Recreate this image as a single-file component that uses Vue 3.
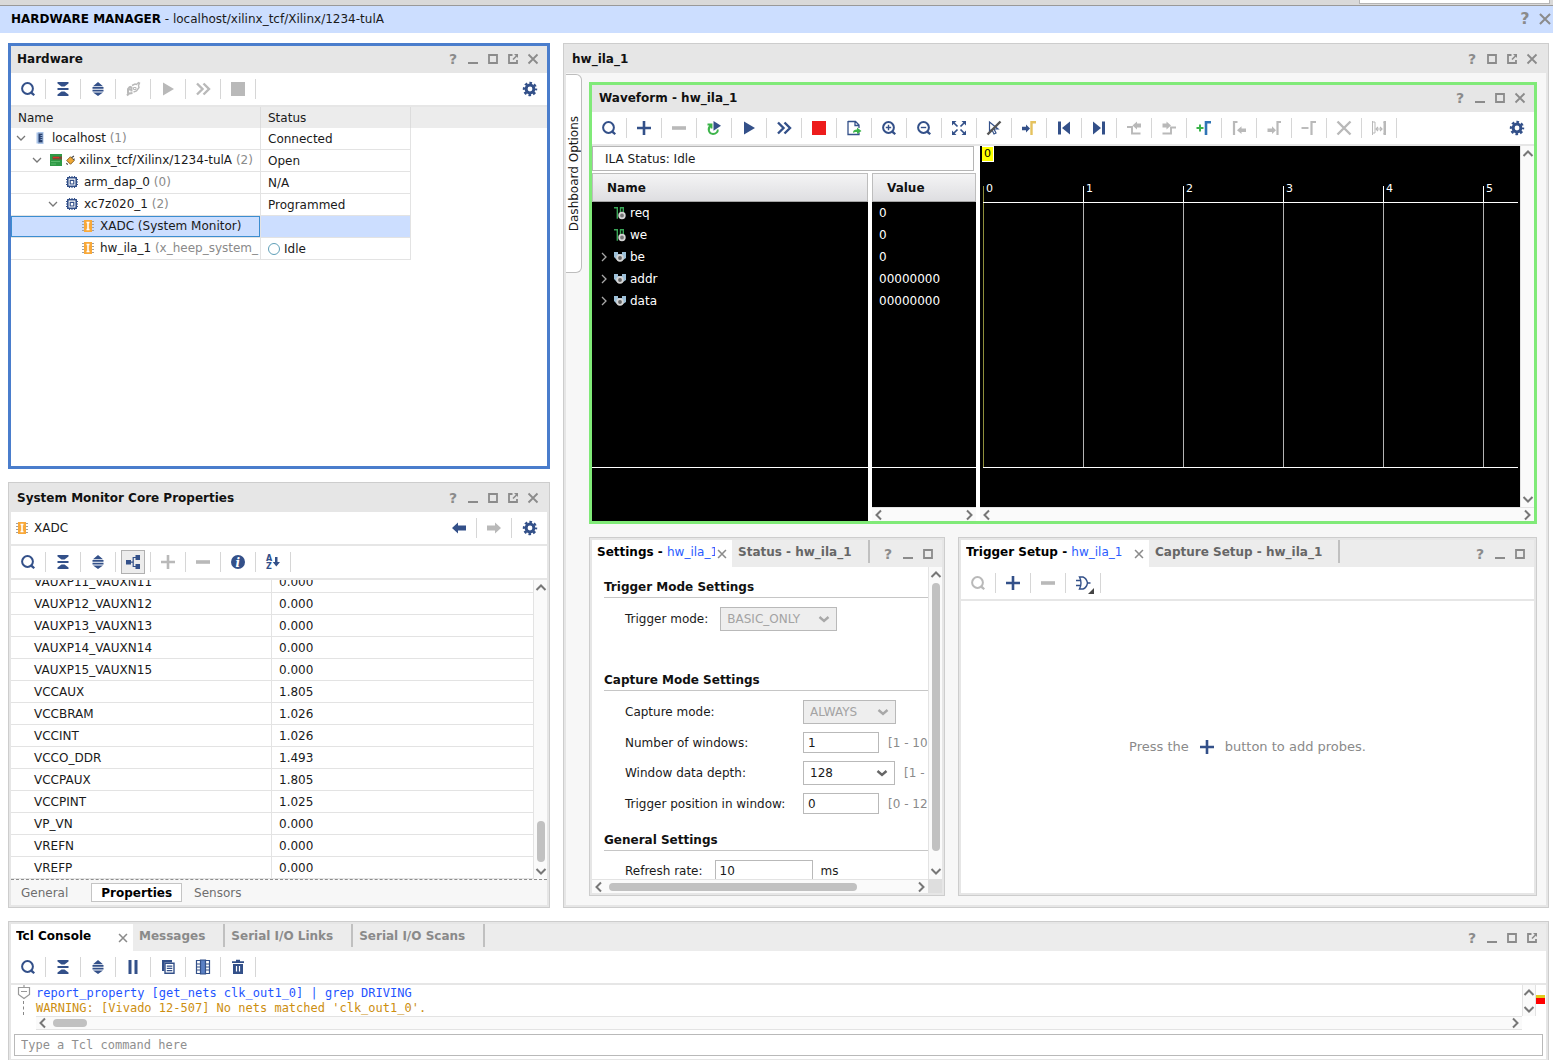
<script setup>
import { h } from 'vue'

const N = '#335089'
const G = '#b9b9b9'

const search = c => `<circle cx="7.5" cy="7.5" r="5.4" fill="none" stroke="${c}" stroke-width="2"/><path d="M11 11.500l1.500-.500 2.500 2.500-1.500 1.500-2.500-2z" fill="${c}"/>`
const plus = c => `<path d="M8 1v14M1 8h14" stroke="${c}" stroke-width="2.6" fill="none"/>`
const minus = c => `<path d="M1 8h14" stroke="${c}" stroke-width="3.6"/>`
const play = c => `<path d="M3 1.500L14 8 3 14.500z" fill="${c}"/>`
const fast = c => `<path d="M2 2.500L7.500 8 2 13.500M8.500 2.500L14 8l-5.500 5.500" fill="none" stroke="${c}" stroke-width="2.400"/>`
const cross = c => `<path d="M1.500 1.500l13 13M14.500 1.500l-13 13" stroke="${c}" stroke-width="2.400"/>`
const arrow = c => `<path d="M1 8l6-5.500V5.500h8v5H7v3z" fill="${c}"/>`
const down = c => `<path d="M3.500 6L8 10l4.500-4" fill="none" stroke="${c}" stroke-width="2.400"/>`

const art = {
  search: search(N),
  searchOff: search(G),
  plus: plus(N),
  plusOff: plus(G),
  minusOff: minus(G),
  play: play(N),
  playOff: play(G),
  fast: fast(N),
  fastOff: fast(G),
  crossOff: cross(G),
  back: arrow(N),
  forward: `<g transform="rotate(180 8 8)">${arrow(G)}</g>`,
  stopOff: `<path d="M1 1h14v14H1z" fill="${G}"/>`,
  stop: `<path d="M1 1h14v14H1z" fill="#ed1c1c"/>`,
  collapse: `<path d="M2.500 1h11v1.500L9.500 5.500h-3L2.500 2.500zM2.500 7h11v2h-11zM6.500 10.500h3l4 3V15h-11v-1.500z" fill="${N}"/>`,
  expand: `<path d="M8 1l5 4.200H3zM2.500 6h11v1.800h-11zM2.500 8.800h11v1.800h-11zM3 11.500h10L8 15z" fill="${N}"/>`,
  gear: `<circle cx="8" cy="8" r="3.900" fill="none" stroke="${N}" stroke-width="3"/><circle cx="8" cy="8" r="6" fill="none" stroke="${N}" stroke-width="2.400" stroke-dasharray="2.600 2.112" stroke-dashoffset="1.300"/>`,
  plugOff: `<path d="M2 14.500l2-2M5 5.500L3 8v4l1.500.500 3-.500M5 5.500l1.500 1v4M4 8.500h3" fill="none" stroke="${G}" stroke-width="2"/><path d="M7 4.500L10 3l1.500.500 2-2 1 .500-1 2.500.500 2-2.500 3.500L8.500 11" fill="none" stroke="${G}" stroke-width="1.400"/><path d="M8.500 6.500h2.500v2H8.500z" fill="none" stroke="${G}" stroke-width="1"/>`,
  tree: `<path d="M1 6h5v4.500H1zM10.500 1H15v5h-4.500zM10.500 10H15v5h-4.500z" fill="${N}"/><path d="M6 8.200h2.500M11 3.500H8.200v9H11" fill="none" stroke="${N}" stroke-width="1.200"/>`,
  info: `<circle cx="8" cy="8" r="7" fill="${N}"/><text x="5.500" y="12.500" font-family="DejaVu Serif" font-size="12" font-weight="bold" font-style="italic" fill="#fff">i</text>`,
  sort: `<text x="1" y="7" font-family="DejaVu Sans" font-size="8" font-weight="bold" fill="${N}">A</text><text x="1" y="15" font-family="DejaVu Sans" font-size="8" font-weight="bold" fill="${N}">Z</text><path d="M10 3h2.500v5H15l-3.700 4.500L7.800 8H10z" fill="${N}"/>`,
  pause: `<path d="M3.500 1h3v14h-3zM9.500 1h3v14h-3z" fill="${N}"/>`,
  copy: `<path d="M2 1h10v2.500H4.500v8.500H2z" fill="${N}"/><path d="M5 4.200h9v10.100H5z" fill="#fff" stroke="${N}" stroke-width="1.400"/><path d="M6.800 7.200h5.500M6.800 9.400h5.500M6.800 11.600h5.500" stroke="${N}" stroke-width="1.200"/>`,
  columns: `<path d="M1.500 1.500h13v13h-13zM1.500 5h13M1.500 8h13M1.500 11h13" fill="none" stroke="${N}" stroke-width="1.200"/><path d="M5.500 1h5v14h-5z" fill="#5b80c4" stroke="${N}" stroke-width="1.200"/>`,
  trash: `<path d="M3 5h10v10H3z" fill="${N}"/><path d="M2 2.200h12V4H2zM6 .800h4v1.500H6z" fill="${N}"/><path d="M6.500 7v5.500M9.500 7v5.500" stroke="#fff" stroke-width="1.200"/>`,
  rerun: `<path d="M7.500 1L15 5.700l-7.500 5z" fill="${N}"/><path d="M1.500 4.500h4v4M4.500 5.500C1 9 3 14 7 14c3 0 5-2 4.800-4.500" fill="none" stroke="#3cb44a" stroke-width="1.900"/>`,
  exportIcon: `<path d="M2 1.500h7.500L13 5v3M2 1v13.500h11v-2M9 1.500V5.500h4" fill="none" stroke="${N}" stroke-width="1.300"/><path d="M7 13c0-2.800 1.500-3.500 4-3.500V7.500l4.500 3.500L11 14v-2c-2 0-3 0-4 1z" fill="#3cb44a"/>`,
  zoomIn: search(N) + `<path d="M7.500 4.800v5.400M4.800 7.500h5.400" stroke="${N}" stroke-width="1.400"/>`,
  zoomOut: search(N) + `<path d="M4.800 7.500h5.400" stroke="${N}" stroke-width="1.400"/>`,
  fit: `<path d="M1 1h4.500L1 5.500zM15 1v4.500L10.500 1zM1 15v-4.500L5.500 15zM15 15h-4.500l4.500-4.500z" fill="${N}"/><path d="M3 3l3.500 3.500M13 3L9.500 6.500M3 13l3.500-3.500M13 13L9.500 9.500" stroke="${N}" stroke-width="1.700"/>`,
  noCursor: `<path d="M3.500 2v9l2.300-1.500L8 14l2-1-2-4h4z" fill="none" stroke="${N}" stroke-width="1.200"/><path d="M14.500 1.500L1.500 14.500" stroke="#555" stroke-width="2.400"/>`,
  toCursor: `<path d="M1 6.700h4V4.500L9 8.500l-4 4v-2.200H1z" fill="${N}"/><path d="M10.500 15V2.200H15" fill="none" stroke="#e5c25e" stroke-width="2.400"/>`,
  first: `<path d="M2 1.500h3v13H2zM14 1.500v13L6 8z" fill="${N}"/>`,
  last: `<path d="M11 1.500h3v13h-3zM2 1.500v13L10 8z" fill="${N}"/>`,
  prevEdge: `<path d="M1 7h5v6.500h8.500" fill="none" stroke="${G}" stroke-width="1.900"/><path d="M6.500 5.500l4.500-4v2h4v4h-4v2z" fill="${G}"/>`,
  nextEdge: `<path d="M1.500 13.500h8.500V7.500h5" fill="none" stroke="${G}" stroke-width="1.900"/><path d="M10 5.500l-4.500-4v2h-4v4h4v2z" fill="${G}"/>`,
  addMarker: `<path d="M.5 8h7M4 4.500v7" stroke="#3cb44a" stroke-width="2"/><path d="M10 15V2.200h5" fill="none" stroke="#2f74b5" stroke-width="2.600"/>`,
  prevMarker: `<path d="M3 15V2h3.500" fill="none" stroke="${G}" stroke-width="2.200"/><path d="M6 10.200l4.500-4v2.300H15v3.500h-4.500v2z" fill="${G}"/>`,
  nextMarker: `<path d="M11.500 15V2H15" fill="none" stroke="${G}" stroke-width="2.200"/><path d="M10 10.200l-4-4v2.300H1.500v3.500H6v2z" fill="${G}"/>`,
  delMarker: `<path d="M.5 8h7" stroke="${G}" stroke-width="1.900"/><path d="M10.500 15V2H15" fill="none" stroke="${G}" stroke-width="2.200"/>`,
  swapMarker: `<path d="M1.500 1v14M1.500 2h2.500v11H1.500M12 2h1v12h-1" fill="none" stroke="${G}" stroke-width="1"/><path d="M14 1v14" stroke="${G}" stroke-width="2"/><path d="M5 9h6M7 7L5 9l2 2M9 7l2 2-2 2" fill="none" stroke="${G}" stroke-width="1.200"/>`,
  gate: `<path d="M4.500 2H8c3 1 4 3.500 4.500 6C12 10.500 11 13 8 14H4.500C6.500 10 6.500 6 4.500 2zM1 5.500h4.500M1 10.500h4.500M12.500 8H15.500" fill="none" stroke="${N}" stroke-width="1.400"/>`,
  min: `<path d="M3 12h10" stroke="#8b8b8b" stroke-width="2"/>`,
  max: `<path d="M4 4h8v8H4z" fill="none" stroke="#8b8b8b" stroke-width="1.800"/>`,
  pop: `<path d="M7.500 4H4v8h8V9" fill="none" stroke="#8b8b8b" stroke-width="1.800"/><path d="M9 3h4v4z" fill="#8b8b8b"/><path d="M8 8.500l4-4" stroke="#8b8b8b" stroke-width="1.600"/>`,
  close: `<path d="M3.500 3.500l9 9M12.500 3.500l-9 9" stroke="#8b8b8b" stroke-width="1.800"/>`,
  up: `<path d="M3.500 10L8 5.500l4.500 4.500" fill="none" stroke="#777" stroke-width="2"/>`,
  down: `<path d="M3.500 6L8 10.500 12.500 6" fill="none" stroke="#777" stroke-width="2"/>`,
  left: `<path d="M10 3.500L5.500 8l4.500 4.500" fill="none" stroke="#777" stroke-width="2"/>`,
  right: `<path d="M6 3.500L10.500 8 6 12.500" fill="none" stroke="#777" stroke-width="2"/>`,
  pick: down('#666'),
  pickOff: down('#a8a8a8'),
  open: `<path d="M4 6l4 4 4-4" fill="none" stroke="#777" stroke-width="1.300"/>`,
  shut: `<path d="M6 4l4 4-4 4" fill="none" stroke="#a8a8a8" stroke-width="1.300"/>`,
  host: `<path d="M4.500 2.500h3v11h-3zM6 2h5.500v1.500H6zM6 12.500h5.500V14H6zM10 2h1.500v12H10z" fill="#a9c3e8"/><path d="M6.500 3.500h4v9h-4z" fill="#27406f"/><path d="M8.500 5.500h2M8.500 7.500h2M8.500 9.500h2" stroke="#a9c3e8" stroke-width=".8"/>`,
  board: `<path d="M2 2h12v12H2z" fill="#2f9a46"/><path d="M4.500 4.500H14v3H4.500z" fill="#7a4a35"/><path d="M5 5.500h6" stroke="#d8322a" stroke-width="1.200"/><path d="M3 9.500h9M3 12h5" stroke="#58b96a" stroke-width="1"/>`,
  plugged: `<path d="M8 2.500l5.500 5.500L8 13.500 2.500 8z" fill="#f0a834" stroke="#7a5518" stroke-width="1.300"/><path d="M9.500 4l3.500-2.500M12 7l2-1.500M2 12l2 2" stroke="#444" stroke-width="1.600"/>`,
  chip: `<path d="M3.800 3.800h8.400v8.400H3.800z" fill="none" stroke="${N}" stroke-width="1.600"/><path d="M7.200 6.400h1.600M6.200 6.400h3.600v3.600H6.200z" fill="#fff" stroke="${N}" stroke-width="1.200"/><path d="M5.500 2v2M8 2v2M10.500 2v2M5.500 12v2M8 12v2M10.500 12v2M2 5.500h2M2 8h2M2 10.500h2M12 5.500h2M12 8h2M12 10.500h2" stroke="${N}" stroke-width="1.100"/>`,
  core: `<path d="M2 3.500h12M2 6.500h12M2 9.500h12M2 12.500h12" stroke="#a0a0a0" stroke-width="1.200"/><path d="M4 2h8v12H4z" fill="#f9a93a"/><path d="M6.500 4.500h3M6.500 11.500h3M8 4.500v7" stroke="#fff" stroke-width="1.600"/>`,
  wire: `<path d="M2 2.700h3.300v11M8.500 12V2.700h2.800V7" fill="none" stroke="#3aa657" stroke-width="1.400"/><circle cx="10" cy="10.500" r="2.800" fill="#777" stroke="#d5d5d5" stroke-width="1.800"/>`,
  bus: `<path d="M2 3h4v2h4V3h4v6l-3 2H5L2 8z" fill="#9dc0d8"/><circle cx="8" cy="9" r="2.800" fill="#666" stroke="#d5d5d5" stroke-width="1.800"/>`,
  fold: `<path d="M8 0v2M2.500 2.500h11v7L8 13.500l-5.500-4zM5 6.500h6" fill="none" stroke="#999" stroke-width="1.200"/>`
}

const Icon = props => h('svg', {
  width: props.size || 16,
  height: props.size || 16,
  viewBox: '0 0 16 16',
  'aria-hidden': 'true',
  innerHTML: art[props.name]
})
Icon.props = ['name', 'size']

const hardwareTools = [
  ['search', 'Search'], ['collapse', 'Collapse all'], ['expand', 'Expand all'], ['plugOff', 'Auto connect'],
  ['playOff', 'Run trigger'], ['fastOff', 'Run trigger immediate'], ['stopOff', 'Stop trigger']
]
const propertyTools = [
  ['search', 'Search'], ['collapse', 'Collapse all'], ['expand', 'Expand all'], ['tree', 'Group by category'],
  ['plusOff', 'Add'], ['minusOff', 'Remove'], ['info', 'Description'], ['sort', 'Sort']
]
const waveTools = [
  ['search', 'Search'], ['plus', 'Add probes'], ['minusOff', 'Remove'], ['rerun', 'Auto re-trigger'],
  ['play', 'Run trigger'], ['fast', 'Run trigger immediate'], ['stop', 'Stop trigger'], ['exportIcon', 'Export data'],
  ['zoomIn', 'Zoom in'], ['zoomOut', 'Zoom out'], ['fit', 'Zoom fit'], ['noCursor', 'Pointer mode'],
  ['toCursor', 'Go to cursor'], ['first', 'First'], ['last', 'Last'], ['prevEdge', 'Previous transition'],
  ['nextEdge', 'Next transition'], ['addMarker', 'Add marker'], ['prevMarker', 'Previous marker'],
  ['nextMarker', 'Next marker'], ['delMarker', 'Delete marker'], ['crossOff', 'Delete all'], ['swapMarker', 'Swap cursors']
]
const triggerTools = [['searchOff', 'Search'], ['plus', 'Add probes'], ['minusOff', 'Remove'], ['gate', 'Trigger condition']]
const consoleTools = [
  ['search', 'Search'], ['collapse', 'Collapse all'], ['expand', 'Expand all'], ['pause', 'Pause output'],
  ['copy', 'Copy'], ['columns', 'Column selection'], ['trash', 'Clear']
]

const windowLabels = { help: 'Help', min: 'Minimize', max: 'Maximize', pop: 'Float', close: 'Close' }

const devices = [
  { depth: 0, open: true, icon: 'host', name: 'localhost', note: '(1)', status: 'Connected' },
  { depth: 1, open: true, icon: 'board', extra: 'plugged', name: 'xilinx_tcf/Xilinx/1234-tulA', note: '(2)', status: 'Open' },
  { depth: 2, icon: 'chip', name: 'arm_dap_0', note: '(0)', status: 'N/A' },
  { depth: 2, open: true, icon: 'chip', name: 'xc7z020_1', note: '(2)', status: 'Programmed' },
  { depth: 3, icon: 'core', name: 'XADC (System Monitor)', note: '', status: '', selected: true },
  { depth: 3, icon: 'core', name: 'hw_ila_1', note: '(x_heep_system_', status: 'Idle', dot: true }
]

const properties = [
  ['VAUXP11_VAUXN11', '0.000'], ['VAUXP12_VAUXN12', '0.000'], ['VAUXP13_VAUXN13', '0.000'],
  ['VAUXP14_VAUXN14', '0.000'], ['VAUXP15_VAUXN15', '0.000'], ['VCCAUX', '1.805'], ['VCCBRAM', '1.026'],
  ['VCCINT', '1.026'], ['VCCO_DDR', '1.493'], ['VCCPAUX', '1.805'], ['VCCPINT', '1.025'],
  ['VP_VN', '0.000'], ['VREFN', '0.000'], ['VREFP', '0.000']
]

const probes = [
  { name: 'req', value: '0' },
  { name: 'we', value: '0' },
  { name: 'be', value: '0', bus: true },
  { name: 'addr', value: '00000000', bus: true },
  { name: 'data', value: '00000000', bus: true }
]
const ticks = [0, 1, 2, 3, 4, 5]
</script>

<template>
  <div class="page">
    <div class="strip"><div class="strip-box"></div></div>
    <header class="banner">
      <h1><b>HARDWARE MANAGER</b> - localhost/xilinx_tcf/Xilinx/1234-tulA</h1>
      <div class="controls">
        <button v-for="c in ['help', 'close']" :key="c" :aria-label="windowLabels[c]">
          <span v-if="c === 'help'" class="q big">?</span><Icon v-else :name="c" size="18" />
        </button>
      </div>
    </header>

    <main class="workspace">
      <div class="column">
        <section class="panel focus">
          <div class="titlebar">
            <h2>Hardware</h2>
            <div class="controls">
              <button v-for="c in ['help', 'min', 'max', 'pop', 'close']" :key="c" :aria-label="windowLabels[c]">
                <span v-if="c === 'help'" class="q">?</span><Icon v-else :name="c" />
              </button>
            </div>
          </div>
          <div class="toolbar">
            <button v-for="[icon, label] in hardwareTools" :key="icon" class="tool" :aria-label="label"><Icon :name="icon" /></button>
            <button class="tool last" aria-label="Settings"><Icon name="gear" /></button>
          </div>
          <div class="fill">
            <table class="devices">
              <colgroup><col class="c-name"><col class="c-status"><col></colgroup>
              <thead><tr><th>Name</th><th>Status</th><th></th></tr></thead>
              <tbody>
                <tr v-for="d in devices" :key="d.name" :class="{ selected: d.selected }">
                  <td>
                    <div class="node" :style="{ paddingLeft: 2 + d.depth * 16 + 'px' }">
                      <span class="twist"><Icon v-if="d.open" name="open" /></span>
                      <Icon :name="d.icon" class="kind" />
                      <Icon v-if="d.extra" :name="d.extra" size="11" />
                      <span class="label">{{ d.name }} <i>{{ d.note }}</i></span>
                    </div>
                  </td>
                  <td><span class="state"><span v-if="d.dot" class="dot"></span>{{ d.status }}</span></td>
                  <td></td>
                </tr>
              </tbody>
            </table>
          </div>
        </section>

        <section class="panel">
          <div class="titlebar">
            <h2>System Monitor Core Properties</h2>
            <div class="controls">
              <button v-for="c in ['help', 'min', 'max', 'pop', 'close']" :key="c" :aria-label="windowLabels[c]">
                <span v-if="c === 'help'" class="q">?</span><Icon v-else :name="c" />
              </button>
            </div>
          </div>
          <div class="toolbar">
            <span class="subject"><Icon name="core" />XADC</span>
            <button class="tool" aria-label="Back"><Icon name="back" /></button>
            <button class="tool" aria-label="Forward"><Icon name="forward" /></button>
            <button class="tool plain" aria-label="Settings"><Icon name="gear" /></button>
          </div>
          <div class="toolbar">
            <button v-for="[icon, label] in propertyTools" :key="icon" class="tool" :class="{ pressed: icon === 'tree' }" :aria-label="label">
              <span><Icon :name="icon" /></span>
            </button>
          </div>
          <div class="prop-body">
            <div class="prop-scroll">
              <table class="props">
                <tbody>
                  <tr v-for="[k, v] in properties" :key="k"><td>{{ k }}</td><td>{{ v }}</td></tr>
                </tbody>
              </table>
            </div>
            <div class="vbar">
              <button aria-label="Scroll up"><Icon name="up" /></button>
              <div class="track low"><div class="thumb"></div></div>
              <button aria-label="Scroll down"><Icon name="down" /></button>
            </div>
          </div>
          <nav class="subtabs">
            <button>General</button>
            <button class="on">Properties</button>
            <button>Sensors</button>
          </nav>
        </section>
      </div>

      <section class="panel">
        <div class="titlebar">
          <h2>hw_ila_1</h2>
          <div class="controls">
            <button v-for="c in ['help', 'max', 'pop', 'close']" :key="c" :aria-label="windowLabels[c]">
              <span v-if="c === 'help'" class="q">?</span><Icon v-else :name="c" />
            </button>
          </div>
        </div>
        <div class="dashboard">
          <button class="side-tab"><span>Dashboard Options</span></button>
          <div class="dash-main">
            <section class="panel wave">
              <div class="titlebar">
                <h2>Waveform - hw_ila_1</h2>
                <div class="controls">
                  <button v-for="c in ['help', 'min', 'max', 'close']" :key="c" :aria-label="windowLabels[c]">
                    <span v-if="c === 'help'" class="q">?</span><Icon v-else :name="c" />
                  </button>
                </div>
              </div>
              <div class="toolbar">
                <button v-for="[icon, label] in waveTools" :key="icon" class="tool" :aria-label="label"><Icon :name="icon" /></button>
                <button class="tool last" aria-label="Settings"><Icon name="gear" /></button>
              </div>
              <div class="wave-body">
                <div class="probe-side">
                  <div class="ila-status">ILA Status: Idle</div>
                  <div class="probe-cols">
                    <div class="probe-names">
                      <div class="probe-head">Name</div>
                      <div class="probe-rows">
                        <div v-for="p in probes" :key="p.name" class="probe">
                          <span class="twist"><Icon v-if="p.bus" name="shut" /></span>
                          <Icon :name="p.bus ? 'bus' : 'wire'" />
                          <span class="probe-name">{{ p.name }}</span>
                        </div>
                      </div>
                      <div class="probe-foot tall"></div>
                    </div>
                    <div class="probe-values">
                      <div class="probe-head">Value</div>
                      <div class="probe-rows">
                        <div v-for="p in probes" :key="p.name" class="probe value">{{ p.value }}</div>
                      </div>
                      <div class="probe-foot"></div>
                      <div class="hbar">
                        <button aria-label="Scroll left"><Icon name="left" /></button>
                        <div class="track"></div>
                        <button aria-label="Scroll right"><Icon name="right" /></button>
                      </div>
                    </div>
                  </div>
                </div>
                <div class="plot-side">
                  <div class="plot-row">
                    <div class="plot">
                      <div class="marker-row"><span class="marker">0</span></div>
                      <div class="axis">
                        <div v-for="t in ticks" :key="t" class="tick"><span>{{ t }}</span></div>
                      </div>
                      <div class="grid">
                        <div v-for="t in ticks" :key="t" class="cell"></div>
                      </div>
                    </div>
                    <div class="vbar">
                      <button aria-label="Scroll up"><Icon name="up" /></button>
                      <div class="track"></div>
                      <button aria-label="Scroll down"><Icon name="down" /></button>
                    </div>
                  </div>
                  <div class="hbar">
                    <button aria-label="Scroll left"><Icon name="left" /></button>
                    <div class="track"></div>
                    <button aria-label="Scroll right"><Icon name="right" /></button>
                  </div>
                </div>
              </div>
            </section>

            <div class="dash-lower">
              <section class="panel settings">
                <div class="tabbar">
                  <div class="tab on settings-tab">
                    <button class="tab-label">Settings - <em>hw_ila_1</em></button>
                    <button class="tab-close" aria-label="Close tab"><Icon name="close" size="14" /></button>
                  </div>
                  <button class="tab dark">Status - hw_ila_1</button>
                  <div class="controls">
                    <button v-for="c in ['help', 'min', 'max']" :key="c" :aria-label="windowLabels[c]">
                      <span v-if="c === 'help'" class="q">?</span><Icon v-else :name="c" />
                    </button>
                  </div>
                </div>
                <div class="form-row">
                  <form class="form" @submit.prevent>
                    <h3>Trigger Mode Settings</h3>
                    <div class="fields first">
                      <div class="field">
                        <label for="tmode">Trigger mode:</label>
                        <span class="pick w117"><select id="tmode" disabled><option>BASIC_ONLY</option></select><Icon name="pickOff" /></span>
                      </div>
                    </div>
                    <h3>Capture Mode Settings</h3>
                    <div class="fields wide">
                      <div class="field">
                        <label for="cmode">Capture mode:</label>
                        <span class="pick w93"><select id="cmode" disabled><option>ALWAYS</option></select><Icon name="pickOff" /></span>
                      </div>
                      <div class="field">
                        <label for="nwin">Number of windows:</label>
                        <input id="nwin" class="w76" value="1"><span class="range">[1 - 10</span>
                      </div>
                      <div class="field">
                        <label for="depth">Window data depth:</label>
                        <span class="pick w92"><select id="depth"><option>128</option></select><Icon name="pick" /></span><span class="range">[1 -</span>
                      </div>
                      <div class="field">
                        <label for="tpos">Trigger position in window:</label>
                        <input id="tpos" class="w76" value="0"><span class="range">[0 - 12</span>
                      </div>
                    </div>
                    <h3>General Settings</h3>
                    <div class="fields">
                      <div class="field">
                        <label for="rate">Refresh rate:</label>
                        <input id="rate" class="w98" value="10"><span class="unit">ms</span>
                      </div>
                    </div>
                  </form>
                  <div class="vbar">
                    <button aria-label="Scroll up"><Icon name="up" /></button>
                    <div class="track long"><div class="thumb"></div></div>
                    <button aria-label="Scroll down"><Icon name="down" /></button>
                  </div>
                </div>
                <div class="form-foot">
                  <div class="hbar">
                    <button aria-label="Scroll left"><Icon name="left" /></button>
                    <div class="track form-track"><div class="thumb"></div></div>
                    <button aria-label="Scroll right"><Icon name="right" /></button>
                  </div>
                  <div class="corner"></div>
                </div>
              </section>

              <section class="panel trigger">
                <div class="tabbar">
                  <div class="tab on">
                    <button class="tab-label">Trigger Setup - <em>hw_ila_1</em></button>
                    <button class="tab-close" aria-label="Close tab"><Icon name="close" size="14" /></button>
                  </div>
                  <button class="tab dark">Capture Setup - hw_ila_1</button>
                  <div class="controls">
                    <button v-for="c in ['help', 'min', 'max']" :key="c" :aria-label="windowLabels[c]">
                      <span v-if="c === 'help'" class="q">?</span><Icon v-else :name="c" />
                    </button>
                  </div>
                </div>
                <div class="toolbar">
                  <button v-for="[icon, label] in triggerTools" :key="icon" class="tool" :class="{ menu: icon === 'gate' }" :aria-label="label"><Icon :name="icon" /></button>
                </div>
                <p class="empty">Press the <Icon name="plus" /> button to add probes.</p>
              </section>
            </div>
          </div>
        </div>
      </section>
    </main>

    <section class="panel console">
      <div class="tabbar">
        <div class="tab on console-tab">
          <button class="tab-label">Tcl Console</button>
          <button class="tab-close" aria-label="Close tab"><Icon name="close" size="14" /></button>
        </div>
        <button class="tab">Messages</button>
        <button class="tab">Serial I/O Links</button>
        <button class="tab">Serial I/O Scans</button>
        <div class="controls">
          <button v-for="c in ['help', 'min', 'max', 'pop']" :key="c" :aria-label="windowLabels[c]">
            <span v-if="c === 'help'" class="q">?</span><Icon v-else :name="c" />
          </button>
        </div>
      </div>
      <div class="toolbar">
        <button v-for="[icon, label] in consoleTools" :key="icon" class="tool" :aria-label="label"><Icon :name="icon" /></button>
      </div>
      <div class="log">
        <div class="gutter"><Icon name="fold" /><span></span></div>
        <div class="log-main">
          <div class="log-text">
            <div class="cmd">report_property [get_nets clk_out1_0] | grep DRIVING</div>
            <div class="warn">WARNING: [Vivado 12-507] No nets matched 'clk_out1_0'.</div>
          </div>
          <div class="hbar">
            <button aria-label="Scroll left"><Icon name="left" /></button>
            <div class="track log-track"><div class="thumb"></div></div>
            <button aria-label="Scroll right"><Icon name="right" /></button>
          </div>
        </div>
        <div class="vbar">
          <button aria-label="Scroll up"><Icon name="up" /></button>
          <div class="track"></div>
          <button aria-label="Scroll down"><Icon name="down" /></button>
        </div>
        <div class="marks"><span></span></div>
      </div>
      <div class="entry"><input placeholder="Type a Tcl command here" aria-label="Tcl command"></div>
    </section>
  </div>
</template>

<style>
body { margin: 0; background: #fff; }
</style>

<style scoped>
* { box-sizing: border-box; }
.page {
  display: flex; flex-direction: column; height: 100vh; min-height: 800px; overflow: hidden;
  font: 12px/16px "DejaVu Sans", sans-serif; color: #1a1a1a;
}
button { padding: 0; border: 0; background: none; font: inherit; color: inherit; display: flex; align-items: center; justify-content: center; }
h1, h2, h3, p { margin: 0; font-size: 12px; font-weight: normal; }
svg { display: block; flex: none; overflow: visible; }
.strip { display: flex; justify-content: flex-end; flex: none; height: 6px; padding-right: 3px; background: #d9d9d9; border-bottom: 1px solid #999; }
.strip-box { width: 191px; height: 4px; background: #fff; border: 1px solid #b5b5b5; border-top: 0; }
.banner { display: flex; align-items: center; justify-content: space-between; flex: none; height: 27px; padding: 0 0 2px 11px; background: #ccdeff; }
.banner h1 b { color: #000; }
.banner .controls { padding: 0; margin-right: -2px; }
.workspace { flex: 1; min-height: 0; display: grid; grid-template-columns: minmax(0, 542fr) minmax(0, 986fr); gap: 13px; padding: 10px 4px 13px 8px; }
.column { display: flex; flex-direction: column; gap: 13px; min-height: 0; }
.column .panel { flex: 1; }

.panel { display: flex; flex-direction: column; min-height: 0; min-width: 0; padding: 2px; border: 1px solid #cdcdcd; background: #e6e6e6; }
.panel.focus { padding: 0; border: 3px solid #4a7dcc; }
.panel.wave { flex: 436; padding: 0; border: 3px solid #80ea78; }
.titlebar { display: flex; align-items: center; justify-content: space-between; flex: none; height: 27px; padding: 0 0 2px 6px; background: #e6e6e6; }
.titlebar h2 { font-weight: bold; color: #111; }
.wave .titlebar { padding-left: 7px; }
.controls { display: flex; padding-right: 4px; margin-left: auto; }
.controls button { width: 20px; height: 20px; }
.q { font-weight: bold; font-size: 14px; color: #8b8b8b; }
.q.big { font-size: 16px; }

.toolbar { display: flex; align-items: center; flex: none; height: 34px; background: #fff; border-bottom: 2px solid #e6e6e6; }
.tool { width: 35px; height: 20px; border-right: 1px solid #d6d6d6; }
.tool.last { margin-left: auto; border-right: 0; }
.tool.plain { border-right: 0; }
.tool.pressed span { padding: 3px; background: #ececec; border: 1px solid #b0b0b0; }
.tool.menu { position: relative; }
.tool.menu::after { content: ""; position: absolute; right: 6px; bottom: -1px; border: 3px solid transparent; border-right-color: #444; border-bottom-color: #444; }
.subject { display: flex; align-items: center; gap: 4px; flex: 1; padding-left: 3px; }
.fill { flex: 1; min-height: 0; overflow: hidden; background: #fff; }

table { border-spacing: 0; table-layout: fixed; width: 100%; }
td, th { padding: 0; }
.c-name { width: 250px; }
.c-status { width: 150px; }
.devices th { height: 21px; padding-left: 7px; text-align: left; font-weight: normal; background: #ececec; border-right: 1px solid #dcdcdc; }
.devices th:last-child { border-right: 0; }
.devices td { height: 22px; border-right: 1px solid #e3e3e3; border-bottom: 1px solid #e3e3e3; overflow: hidden; white-space: nowrap; }
.devices td:first-child { vertical-align: top; }
.devices td:last-child { border: 0; }
.selected td:nth-child(1) { background: #ccdeff; box-shadow: inset 0 0 0 1px #3b8dd0; }
.selected td:nth-child(2) { background: #ccdeff; }
.node { display: flex; align-items: center; height: 20px; }
.twist { width: 16px; height: 16px; flex: none; }
.kind { margin: 0 4px 0 3px; }
.kind + svg { margin: 0 3px 0 -3px; }
.label i { font-style: normal; color: #8a8a8a; }
.state { display: flex; align-items: center; gap: 4px; padding-left: 7px; }
.dot { width: 12px; height: 12px; border: 1px solid #5f9fb8; border-radius: 50%; }

.prop-body { flex: 1; min-height: 0; display: flex; background: #fff; }
.prop-scroll { flex: 1; min-width: 0; display: flex; flex-direction: column; justify-content: flex-end; overflow: hidden; }
.props td { height: 22px; border-bottom: 1px solid #e3e3e3; padding-left: 7px; }
.props td:first-child { padding-left: 23px; border-right: 1px solid #e3e3e3; }
.subtabs { display: flex; align-items: center; flex: none; height: 26px; padding-left: 10px; border-top: 1px dashed #8c8c8c; background: #f7f7f7; color: #6e6e6e; }
.subtabs button { margin-right: 12px; }
.subtabs button.on { margin-left: 11px; height: 19px; padding: 0 9px; border: 1px solid #c4c4c4; background: #fff; color: #000; font-weight: bold; }

.vbar { display: flex; flex-direction: column; align-items: center; flex: none; width: 14px; background: #fafafa; border-left: 1px solid #e3e3e3; }
.vbar button, .hbar button { width: 14px; height: 16px; flex: none; }
.vbar .track { flex: 1; width: 8px; display: flex; flex-direction: column; }
.track.low { justify-content: flex-end; padding-bottom: 1px; }
.track.low .thumb { height: 41px; }
.track.long .thumb { height: 268px; }
.thumb { border-radius: 4px; background: #c1c1c1; }
.hbar { display: flex; align-items: center; flex: none; height: 14px; background: #fafafa; border-top: 1px solid #e3e3e3; }
.hbar .track { flex: 1; height: 8px; display: flex; }

.dashboard { flex: 1; min-height: 0; display: flex; background: #f7f7f7; }
.side-tab { width: 16px; height: 199px; margin-top: 1px; padding: 0; border: 1px solid #bdbdbd; border-left: 0; border-radius: 0 6px 6px 0; background: #fff; }
.side-tab span { writing-mode: vertical-rl; transform: rotate(180deg); }
.dash-main { flex: 1; min-width: 0; display: flex; flex-direction: column; gap: 13px; padding: 9px 9px 9px 7px; }
.dash-lower { flex: 359; min-height: 0; display: flex; gap: 13px; }
.settings { flex: 350; }
.trigger { flex: 573; }

.wave-body { flex: 1; min-height: 0; display: flex; gap: 4px; background: #fff; }
.probe-side { flex: 384; min-width: 0; display: flex; flex-direction: column; gap: 2px; }
.ila-status { height: 25px; margin-right: 2px; padding: 4px 12px; border: 1px solid #b5b5b5; }
.probe-cols { flex: 1; min-height: 0; display: flex; gap: 4px; }
.probe-names { flex: 276; min-width: 0; display: flex; flex-direction: column; }
.probe-values { flex: 104; min-width: 0; display: flex; flex-direction: column; }
.probe-head { height: 29px; padding: 6px 14px; border: 1px solid #bdbdbd; border-bottom-color: #a5a5a5; background: linear-gradient(#f4f4f5, #dedee1); color: #111; font-weight: bold; }
.probe-rows { flex: 1; background: #000; color: #fff; border-bottom: 1px solid #fff; }
.probe { display: flex; align-items: center; height: 22px; padding-left: 4px; }
.probe-name { margin-left: 2px; }
.probe.value { padding-left: 7px; }
.probe-foot { height: 39px; background: #000; }
.probe-foot.tall { height: 53px; }
.plot-side { flex: 554; min-width: 0; display: flex; flex-direction: column; }
.plot-row { flex: 1; min-height: 0; display: flex; }
.plot { flex: 1; min-width: 0; display: flex; flex-direction: column; padding: 0 2px 39px 3px; background: #000; color: #fff; font-size: 11px; line-height: 12px; }
.marker-row { height: 40px; margin-left: -1px; }
.marker { display: block; width: 12px; height: 16px; padding: 1px 0 0 2px; background: #ff0; border: solid #fff; border-width: 1px 1px 1px 0; color: #000; }
.axis { display: flex; height: 17px; border-bottom: 1px solid #fff; overflow-x: clip; overflow-y: visible; }
.tick { flex: none; width: 100px; padding: 0 0 0 2px; border-left: 1px solid #fff; line-height: 5px; }
.tick:first-child { border-left-color: #8f8f3c; }
.grid { flex: 1; display: flex; border-bottom: 1px solid #fff; overflow: hidden; }
.cell { flex: none; width: 100px; border-left: 1px solid #b4b4b4; }
.cell:first-child { border-left-color: #8f8f3c; }

.tabbar { display: flex; align-items: center; flex: none; height: 27px; background: #ececec; }
.tab { height: 23px; align-self: flex-start; padding: 0 18px 0 6px; border-right: 2px solid #c0c0c0; font-weight: bold; color: #8a8a8a; white-space: nowrap; }
.tab.dark { color: #666; padding-right: 16px; }
.tab.on { display: flex; align-items: center; height: 27px; padding: 0 3px 0 5px; border: 0; background: #fff; color: #000; }
.tab em { font-style: normal; font-weight: normal; color: #2a5cff; white-space: pre; }
.tab-label { display: block; padding-bottom: 3px; overflow: hidden; white-space: nowrap; text-align: left; }
.tab-close { margin-left: auto; }
.settings-tab { width: 140px; }
.trigger .tab.on { width: 188px; }
.console-tab { width: 122px; }

.form-row { flex: 1; min-height: 0; display: flex; background: #fff; }
.form { flex: 1; min-width: 0; overflow: hidden; padding: 12px 0 0 12px; }
.form h3 { height: 19px; font-weight: bold; color: #111; border-bottom: 1px solid #c6c6c6; white-space: nowrap; }
.fields { display: flex; flex-direction: column; gap: 8px; padding: 9px 0 18px 21px; }
.fields.first { padding-bottom: 41px; }
.field { display: flex; align-items: center; white-space: nowrap; }
.field label { margin-right: 12px; }
.wide .field label { width: 178px; margin: 0; flex: none; }
.pick { position: relative; display: block; flex: none; }
.pick svg { position: absolute; right: 5px; top: 4px; pointer-events: none; }
select { appearance: none; display: block; width: 100%; height: 24px; padding: 0 6px; border: 1px solid #b9b9b9; border-radius: 0; background: #fff; font: inherit; color: #1a1a1a; }
select:disabled { background: #eee; color: #a3a3a3; opacity: 1; }
input { flex: none; height: 21px; padding: 0 4px; border: 1px solid #b9b9b9; border-radius: 0; background: #fff; font: inherit; color: #1a1a1a; }
.w117 { width: 117px; }
.w93 { width: 93px; }
.w92 { width: 92px; }
.w76 { width: 76px; }
.w98 { width: 98px; }
.range { margin-left: 9px; color: #8a8a8a; }
.unit { margin-left: 8px; }
.form-foot { display: flex; flex: none; }
.form-foot .hbar { flex: 1; }
.form-track { padding-left: 3px; }
.form-track .thumb { width: 248px; }
.corner { width: 14px; background: #dedede; }

.empty { flex: 1; display: flex; align-items: center; justify-content: center; gap: 10px; background: #fff; color: #8a8a8a; font-size: 13px; }

.console { flex: none; margin: 0 4px 0 8px; padding-bottom: 1px; border-bottom: 0; }
.log { display: flex; height: 45px; background: #fff; font: 12px/15px "DejaVu Sans Mono", monospace; }
.gutter { width: 25px; display: flex; flex-direction: column; align-items: center; }
.gutter span { flex: none; height: 14px; border-left: 1px dashed #888; }
.log-main { flex: 1; min-width: 0; display: flex; flex-direction: column; }
.log-text { height: 31px; padding-top: 1px; white-space: pre; }
.cmd { color: #1f55ff; }
.warn { color: #cc8e10; }
.log-main .hbar { border-bottom: 1px solid #e3e3e3; }
.log-track { padding-left: 3px; }
.log-track .thumb { width: 34px; }
.log .vbar { height: 31px; border-right: 1px solid #e3e3e3; }
.log .vbar button { height: 15px; }
.marks { width: 10px; padding: 10px 1px 0 0; }
.marks span { display: block; height: 9px; background: #f00; border-top: 3px solid #e2cc1e; }
.entry { padding: 4px 3px 3px; background: #fff; }
.entry input { display: block; width: 100%; height: 22px; padding: 0 6px; font-family: "DejaVu Sans Mono", monospace; }
.entry input::placeholder { color: #8f8f8f; opacity: 1; }
</style>
